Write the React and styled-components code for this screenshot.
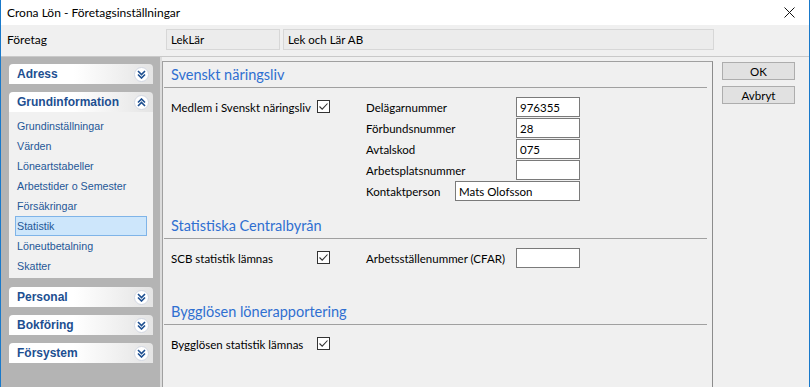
import React from 'react';
import styled, { createGlobalStyle } from 'styled-components';

const GlobalStyle = createGlobalStyle`
    html, body {
        margin: 0;
        padding: 0;
        background: #f0f0f0;
    }
    * {
        box-sizing: border-box;
    }
`;

const Window = styled.div`
    width: 810px;
    height: 387px;
    display: flex;
    flex-direction: column;
    background: #f0f0f0;
    border-left: 1px solid #1979ca;
    border-right: 1px solid #1979ca;
    font-family: Lato, "Liberation Sans", Arial, sans-serif;
    font-size: 12px;
    color: #000;
    white-space: nowrap;
    overflow: hidden;
`;

const TitleBar = styled.div`
    height: 25px;
    flex: none;
    background: #fff;
    display: flex;
    align-items: center;
    justify-content: space-between;
    padding: 0 14px 0 6px;
`;

const Close = styled.svg`
    width: 11px;
    height: 11px;
`;

const CompanyRow = styled.div`
    height: 32px;
    flex: none;
    display: flex;
    align-items: center;
    padding: 0 0 2px 6px;
    border-bottom: 1px solid #c9c9c9;
`;

const CompanyLabel = styled.div`
    width: 159px;
`;

const ReadOnlyBox = styled.div`
    width: ${p => p.$w}px;
    height: 21px;
    margin-right: 3px;
    display: flex;
    align-items: center;
    padding-left: 4px;
    background: #ececec;
    border: 1px solid #d7d7d7;
    font-size: 11.5px;
`;

const Body = styled.div`
    flex: 1;
    display: flex;
    min-height: 0;
`;

const Nav = styled.div`
    width: 161px;
    flex: none;
    background: #b4b4b4;
    padding: 7px 7px 0 8px;
    border-right: 2px solid #dcdcdc;
    display: flex;
    flex-direction: column;
    gap: 8px;
`;

const Group = styled.div`
    display: flex;
    flex-direction: column;
`;

const GroupHeader = styled.div`
    height: 20px;
    display: flex;
    align-items: center;
    justify-content: space-between;
    padding: 0 4px 0 8px;
    border-radius: 4px 4px 0 0;
    background: linear-gradient(to right, #ffffff 0%, #ffffff 45%, #e4e4e4 100%);
    font-family: "Liberation Sans", Tahoma, sans-serif;
    font-weight: bold;
    font-size: 12px;
    color: #1d4f91;
`;

const Chevron = styled.div`
    width: 15px;
    height: 15px;
    border-radius: 50%;
    background: #fff;
    border: 1px solid #d2d7e2;
    display: flex;
    align-items: center;
    justify-content: center;
`;

const Items = styled.div`
    background: #f1f1f1;
    padding: 4px 6px 2px 6px;
    margin-bottom: 1px;
`;

const Item = styled.div`
    height: 20px;
    display: flex;
    align-items: center;
    padding-left: 1px;
    border: 1px solid ${p => (p.$selected ? '#7fb4e8' : 'transparent')};
    background: ${p => (p.$selected ? '#cde6fb' : 'transparent')};
    font-family: "Liberation Sans", Tahoma, sans-serif;
    font-size: 10.7px;
    color: #1f5797;
`;

const Main = styled.div`
    width: 551px;
    flex: none;
    margin-top: 4px;
    border-top: 1px solid #a0a0a0;
    border-left: 1px solid #a0a0a0;
    border-right: 1px solid #8c8c8c;
    padding: 1px 5px 0 1px;
    display: flex;
    flex-direction: column;
`;

const SectionHeader = styled.div`
    height: ${p => p.$h || 25}px;
    padding: 0 0 4px 7px;
    display: flex;
    align-items: flex-end;
    border-bottom: 1px solid #a0a0a0;
    margin-top: ${p => p.$top || 0}px;
    font-size: 14.5px;
    color: #2f6fd1;
`;

const Row = styled.div`
    display: flex;
    align-items: flex-start;
    margin-top: 9px;
    padding-left: 7px;
    font-size: 11.5px;
`;

const RowLabel = styled.div`
    width: 146px;
    flex: none;
    height: 20px;
    display: flex;
    align-items: center;
`;

const Check = styled.div`
    width: 13px;
    height: 13px;
    flex: none;
    margin-top: 3px;
    border: 1px solid #333;
    background: #fff;
    display: flex;
    align-items: center;
    justify-content: center;
`;

const Fields = styled.div`
    margin-left: 36px;
    display: grid;
    grid-template-columns: 89px 61px 64px;
    grid-auto-rows: 20px;
    row-gap: 1px;
`;

const FieldLabel = styled.div`
    display: flex;
    align-items: center;
    grid-column: ${p => (p.$short ? '1' : '1 / 3')};
`;

const Input = styled.div`
    height: 20px;
    display: flex;
    align-items: center;
    padding-left: 3px;
    background: #fff;
    border: 1px solid #7a7a7a;
    grid-column: ${p => (p.$wide ? '2 / 4' : '3')};
`;

const Buttons = styled.div`
    margin: 5px 0 0 9px;
    display: flex;
    flex-direction: column;
    gap: 6px;
`;

const Button = styled.div`
    width: 73px;
    height: 18px;
    display: flex;
    align-items: center;
    justify-content: center;
    background: #e1e1e1;
    border: 1px solid #adadad;
    font-size: 11.5px;
`;

const ChevronIcon = ({ up }) => (
    <svg width="9" height="9" viewBox="0 0 9 9">
        <path
            d={up ? 'M1 4.5 L4.5 1 L8 4.5 M1 8 L4.5 4.5 L8 8' : 'M1 1 L4.5 4.5 L8 1 M1 4.5 L4.5 8 L8 4.5'}
            fill="none"
            stroke="#1d4f91"
            strokeWidth="1.6"
        />
    </svg>
);

const CheckMark = () => (
    <svg width="11" height="11" viewBox="0 0 11 11">
        <path d="M1.5 5.5 L4.2 8.2 L9.5 2.5" fill="none" stroke="#333" strokeWidth="1.1" />
    </svg>
);

const items = [
    'Grundinställningar',
    'Värden',
    'Löneartstabeller',
    'Arbetstider o Semester',
    'Försäkringar',
    'Statistik',
    'Löneutbetalning',
    'Skatter',
];

export default function App() {
    return (
        <Window>
            <GlobalStyle />
            <TitleBar>
                <span>Crona Lön - Företagsinställningar</span>
                <Close viewBox="0 0 11 11">
                    <path d="M0.5 0.5 L10.5 10.5 M10.5 0.5 L0.5 10.5" stroke="#111" strokeWidth="1" />
                </Close>
            </TitleBar>
            <CompanyRow>
                <CompanyLabel>Företag</CompanyLabel>
                <ReadOnlyBox $w={114}>LekLär</ReadOnlyBox>
                <ReadOnlyBox $w={431}>Lek och Lär AB</ReadOnlyBox>
            </CompanyRow>
            <Body>
                <Nav>
                    <Group>
                        <GroupHeader>Adress<Chevron><ChevronIcon /></Chevron></GroupHeader>
                    </Group>
                    <Group>
                        <GroupHeader>Grundinformation<Chevron><ChevronIcon up /></Chevron></GroupHeader>
                        <Items>
                            {items.map(i => (
                                <Item key={i} $selected={i === 'Statistik'}>{i}</Item>
                            ))}
                        </Items>
                    </Group>
                    <Group>
                        <GroupHeader>Personal<Chevron><ChevronIcon /></Chevron></GroupHeader>
                    </Group>
                    <Group>
                        <GroupHeader>Bokföring<Chevron><ChevronIcon /></Chevron></GroupHeader>
                    </Group>
                    <Group>
                        <GroupHeader>Försystem<Chevron><ChevronIcon /></Chevron></GroupHeader>
                    </Group>
                </Nav>
                <Main>
                    <SectionHeader $h={25}>Svenskt näringsliv</SectionHeader>
                    <Row>
                        <RowLabel>Medlem i Svenskt näringsliv</RowLabel>
                        <Check><CheckMark /></Check>
                        <Fields>
                            <FieldLabel>Delägarnummer</FieldLabel>
                            <Input>976355</Input>
                            <FieldLabel>Förbundsnummer</FieldLabel>
                            <Input>28</Input>
                            <FieldLabel>Avtalskod</FieldLabel>
                            <Input>075</Input>
                            <FieldLabel>Arbetsplatsnummer</FieldLabel>
                            <Input />
                            <FieldLabel $short>Kontaktperson</FieldLabel>
                            <Input $wide>Mats Olofsson</Input>
                        </Fields>
                    </Row>
                    <SectionHeader $top={13}>Statistiska Centralbyrån</SectionHeader>
                    <Row>
                        <RowLabel>SCB statistik lämnas</RowLabel>
                        <Check><CheckMark /></Check>
                        <Fields>
                            <FieldLabel>Arbetsställenummer (CFAR)</FieldLabel>
                            <Input />
                        </Fields>
                    </Row>
                    <SectionHeader $top={32}>Bygglösen lönerapportering</SectionHeader>
                    <Row>
                        <RowLabel>Bygglösen statistik lämnas</RowLabel>
                        <Check><CheckMark /></Check>
                    </Row>
                </Main>
                <Buttons>
                    <Button>OK</Button>
                    <Button>Avbryt</Button>
                </Buttons>
            </Body>
        </Window>
    );
}
